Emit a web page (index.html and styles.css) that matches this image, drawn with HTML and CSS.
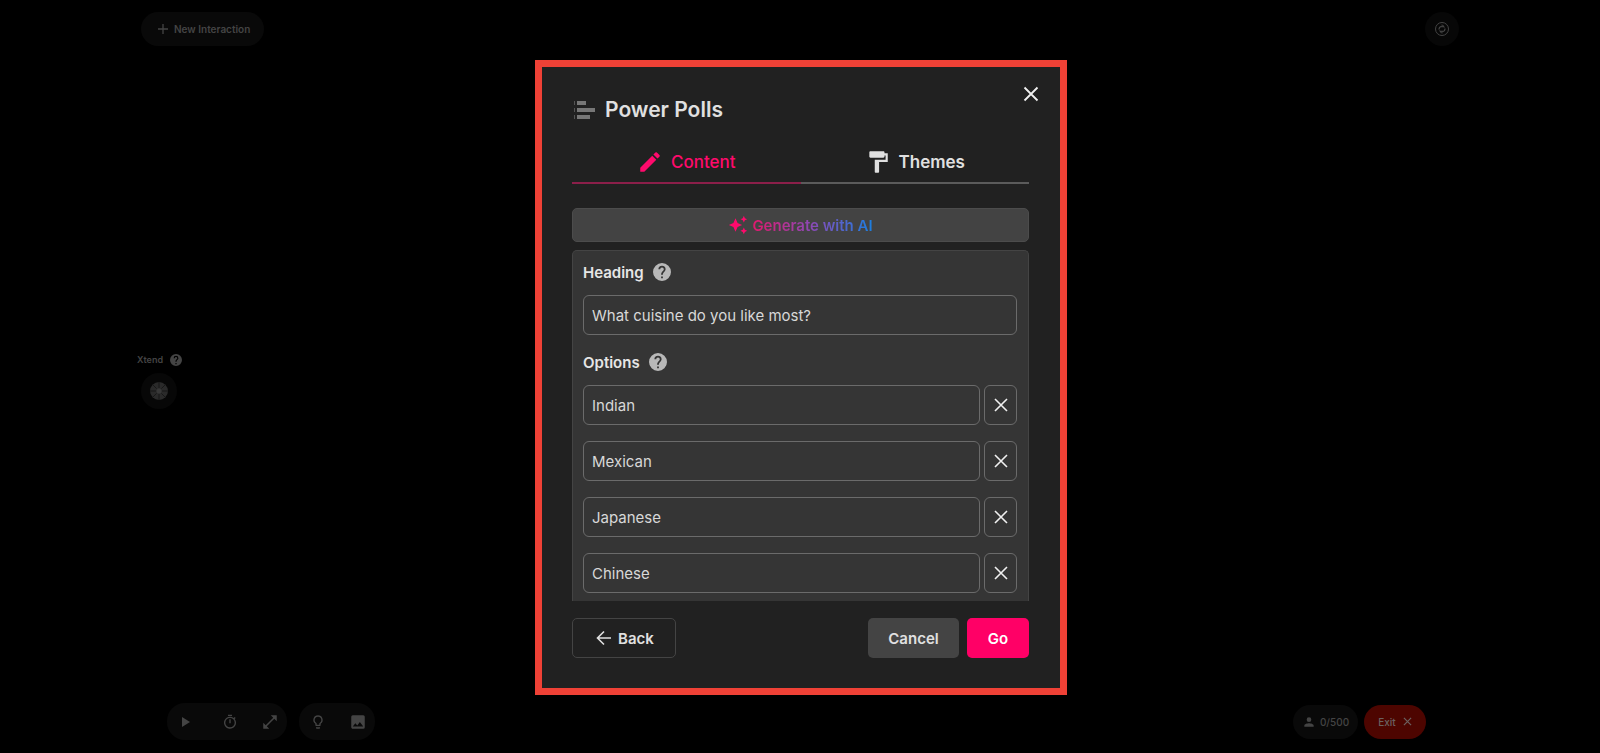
FILE: index.html
```html
<!DOCTYPE html>
<html lang="en">
<head>
    <meta charset="utf-8">
    <title>Power Polls</title>
    <link rel="stylesheet" href="styles.css">
</head>

<body>
    <div class="page">
        <div class="top-bar">
            <button class="pill new-button">
                <svg width="12" height="12" viewBox="0 0 12 12"><path d="M6 1v10M1 6h10" stroke="currentColor" stroke-width="1.3"/></svg>
                New Interaction
            </button>
            <button class="round-button small" aria-label="Account">
                <svg width="16" height="16" viewBox="0 0 16 16" fill="none" stroke="currentColor"><circle cx="8" cy="8" r="6.5"/><path d="M5 8.500V8a3 3 0 015.500-1.500M11 7.500V8a3 3 0 01-5.500 1.500" stroke-width="1.300"/><path d="M8 3.500l1.500 1.500L8 6.500M8 9.500L6.500 11 8 12.500"/></svg>
            </button>
        </div>

        <div class="side">
            <div class="side-label">
                Xtend
                <svg width="12" height="12" viewBox="2 2 20 20" fill="currentColor"><path d="M12 2a10 10 0 100 20 10 10 0 000-20zm1 17h-2v-2h2v2zm2.070-7.750l-.9.920C13.450 12.900 13 13.500 13 15h-2v-.5c0-1.100.45-2.100 1.170-2.830l1.240-1.260c.37-.36.59-.86.59-1.410a2 2 0 00-4 0H8a4 4 0 018 0c0 .88-.36 1.680-.93 2.250z"/></svg>
            </div>
            <button class="round-button" aria-label="Xtend">
                <svg width="18" height="18" viewBox="0 0 18 18"><circle cx="9" cy="9" r="9" fill="#2a2a2a"/><path d="M9 0v6M9 12v6M0 9h6M12 9h6M2.600 2.600l4 4M11.400 11.400l4 4M15.400 2.600l-4 4M6.600 11.400l-4 4" stroke="#171717" stroke-width="1"/><circle cx="9" cy="9" r="2.500" fill="#383838"/></svg>
            </button>
        </div>

        <div class="bottom-bar">
            <div class="group">
                <div class="pill tools">
                    <button class="play-button" aria-label="Play"><svg width="16" height="16" viewBox="0 0 16 16" fill="currentColor"><path d="M4 3v10l8-5z"/></svg></button>
                    <button aria-label="Timer"><svg width="16" height="16" viewBox="0 0 24 24" fill="currentColor"><path d="M15 1H9v2h6V1zm-4 13h2V8h-2v6zm8.030-6.610l1.420-1.420c-.43-.51-.9-.99-1.410-1.410l-1.420 1.420A9 9 0 1019.030 7.390zM12 20a7 7 0 110-14 7 7 0 010 14z"/></svg></button>
                    <button aria-label="Expand"><svg width="18" height="18" viewBox="0 0 24 24" fill="currentColor"><path d="M21 11V3h-8l3.290 3.290-10 10L3 13v8h8l-3.290-3.290 10-10z"/></svg></button>
                </div>
                <div class="pill tools two">
                    <button aria-label="Ideas"><svg width="16" height="16" viewBox="0 0 24 24" fill="currentColor"><path d="M9 21c0 .55.45 1 1 1h4c.55 0 1-.45 1-1v-1H9v1zm3-19a7 7 0 00-4 12.740V17c0 .55.45 1 1 1h6c.55 0 1-.45 1-1v-2.260A7 7 0 0012 2zm2.850 11.100l-.85.600V16h-4v-2.300l-.85-.6A5 5 0 1114.850 13.100z"/></svg></button>
                    <button aria-label="Image"><svg width="18" height="18" viewBox="0 0 24 24" fill="currentColor"><path d="M21 19V5a2 2 0 00-2-2H5a2 2 0 00-2 2v14c0 1.100.9 2 2 2h14a2 2 0 002-2zM8.500 13.500l2.500 3 3.500-4.500 4.500 6H5l3.500-4.500z"/></svg></button>
                </div>
            </div>
            <div class="group right">
                <div class="pill count">
                    <svg width="14" height="14" viewBox="0 0 24 24" fill="currentColor"><path d="M12 12a4 4 0 100-8 4 4 0 000 8zm0 2c-2.670 0-8 1.340-8 4v2h16v-2c0-2.660-5.330-4-8-4z"/></svg>
                    0/500
                </div>
                <button class="pill exit-button">
                    Exit
                    <svg width="9" height="9" viewBox="0 0 10 10"><path d="M1 1l8 8M9 1l-8 8" stroke="currentColor" stroke-width="1.300"/></svg>
                </button>
            </div>
        </div>
    </div>

    <div class="overlay">
        <div class="modal" role="dialog" aria-labelledby="modal-title">
            <button class="close-button" aria-label="Close">
                <svg width="16" height="16" viewBox="0 0 16 16"><path d="M1.500 1.500l13 13M14.500 1.500l-13 13" stroke="currentColor" stroke-width="1.800"/></svg>
            </button>

            <div class="modal-title">
                <svg width="23" height="20" viewBox="0 0 23 20" fill="#777"><path d="M5 1h9v4H5zM5 8h18v4H5zM5 15h13v4H5z"/><path d="M2 1h1v4H2zM2 8h1v4H2zM2 15h1v4H2z" fill="#555"/></svg>
                <h2 id="modal-title">Power Polls</h2>
            </div>

            <div class="tabs">
                <button class="tab active">
                    <svg width="26" height="26" viewBox="0 0 24 24" fill="currentColor"><path d="M3 17.250V21h3.750L17.810 9.940l-3.750-3.750L3 17.250zM20.710 7.040a1 1 0 000-1.410l-2.340-2.340a1 1 0 00-1.410 0l-1.830 1.830 3.750 3.750 1.830-1.830z"/></svg>
                    Content
                </button>
                <button class="tab">
                    <svg width="26" height="26" viewBox="0 0 24 24" fill="currentColor"><path d="M18 4V3c0-.55-.45-1-1-1H5c-.55 0-1 .45-1 1v4c0 .55.45 1 1 1h12c.55 0 1-.45 1-1V6h1v4H9v11c0 .55.45 1 1 1h2c.55 0 1-.45 1-1v-9h8V4h-3z"/></svg>
                    Themes
                </button>
            </div>

            <button class="ai-button">
                <svg width="20" height="20" viewBox="0 0 24 24" fill="#ff0a6c"><path d="M19 9l1.250-2.750L23 5l-2.750-1.250L19 1l-1.250 2.750L15 5l2.750 1.250L19 9zM11.500 9.500L9 4 6.500 9.500 1 12l5.500 2.500L9 20l2.500-5.500L17 12l-5.500-2.500zM19 15l-1.250 2.750L15 19l2.750 1.250L19 23l1.250-2.750L23 19l-2.750-1.250L19 15z"/></svg>
                <span>Generate with AI</span>
            </button>

            <div class="panel">
                <div class="label-row">
                    <label for="heading">Heading</label>
                    <svg width="18" height="18" viewBox="2 2 20 20" fill="currentColor"><path d="M12 2a10 10 0 100 20 10 10 0 000-20zm1 17h-2v-2h2v2zm2.070-7.750l-.9.920C13.450 12.900 13 13.500 13 15h-2v-.5c0-1.100.45-2.100 1.170-2.830l1.240-1.260c.37-.36.59-.86.59-1.410a2 2 0 00-4 0H8a4 4 0 018 0c0 .88-.36 1.680-.93 2.250z"/></svg>
                </div>
                <input type="text" id="heading" class="field" value="What cuisine do you like most?">

                <div class="label-row options-label">
                    <label for="option1">Options</label>
                    <svg width="18" height="18" viewBox="2 2 20 20" fill="currentColor"><path d="M12 2a10 10 0 100 20 10 10 0 000-20zm1 17h-2v-2h2v2zm2.070-7.750l-.9.920C13.450 12.900 13 13.500 13 15h-2v-.5c0-1.100.45-2.100 1.170-2.830l1.240-1.260c.37-.36.59-.86.59-1.410a2 2 0 00-4 0H8a4 4 0 018 0c0 .88-.36 1.680-.93 2.250z"/></svg>
                </div>
                <div class="option">
                    <input type="text" id="option1" class="field" value="Indian">
                    <button class="remove-button" aria-label="Remove"><svg width="14" height="14" viewBox="0 0 14 14"><path d="M1 1l12 12M13 1L1 13" stroke="currentColor" stroke-width="1.600"/></svg></button>
                </div>
                <div class="option">
                    <input type="text" class="field" aria-label="Option 2" value="Mexican">
                    <button class="remove-button" aria-label="Remove"><svg width="14" height="14" viewBox="0 0 14 14"><path d="M1 1l12 12M13 1L1 13" stroke="currentColor" stroke-width="1.600"/></svg></button>
                </div>
                <div class="option">
                    <input type="text" class="field" aria-label="Option 3" value="Japanese">
                    <button class="remove-button" aria-label="Remove"><svg width="14" height="14" viewBox="0 0 14 14"><path d="M1 1l12 12M13 1L1 13" stroke="currentColor" stroke-width="1.600"/></svg></button>
                </div>
                <div class="option">
                    <input type="text" class="field" aria-label="Option 4" value="Chinese">
                    <button class="remove-button" aria-label="Remove"><svg width="14" height="14" viewBox="0 0 14 14"><path d="M1 1l12 12M13 1L1 13" stroke="currentColor" stroke-width="1.600"/></svg></button>
                </div>
            </div>

            <div class="modal-footer">
                <button class="btn back-button">
                    <svg width="16" height="16" viewBox="0 0 16 16" fill="none" stroke="currentColor" stroke-width="1.600"><path d="M15 8H2M8 1.500L1.500 8 8 14.500"/></svg>
                    Back
                </button>
                <button class="btn cancel-button">Cancel</button>
                <button class="btn go-button">Go</button>
            </div>
        </div>
    </div>
</body>
</html>
```
FILE: styles.css
```css
* {
    box-sizing: border-box;
}

body {
    margin: 0;
    background-color: #000;
    font-family: Inter, "Liberation Sans", sans-serif;
    color: #e0e0e0;
}

button {
    font-family: inherit;
    border: none;
    padding: 0;
    background: none;
    color: inherit;
}

svg {
    display: block;
    flex-shrink: 0;
}

/* dimmed screen behind the modal */
.page {
    min-height: 100vh;
    padding: 12px 141px 13px;
    display: flex;
    flex-direction: column;
    justify-content: space-between;
    color: #444;
}

.top-bar,
.bottom-bar,
.group {
    display: flex;
    align-items: center;
}

.top-bar,
.bottom-bar {
    justify-content: space-between;
}

.bottom-bar {
    padding: 0 33px 0 26px;
}

.group {
    gap: 12px;
}

.group.right {
    gap: 6px;
}

.pill {
    display: flex;
    align-items: center;
    justify-content: center;
    height: 34px;
    border-radius: 18px;
    background-color: #090909;
    font-size: 10px;
}

.new-button {
    gap: 5px;
    padding: 0 14px 0 16px;
    font-weight: 600;
}

.round-button {
    display: flex;
    align-items: center;
    justify-content: center;
    width: 36px;
    height: 36px;
    border-radius: 50%;
    background-color: #070707;
}

.round-button.small {
    width: 34px;
    height: 34px;
}

.side {
    padding-top: 13px;
}

.side-label {
    display: flex;
    align-items: center;
    gap: 7px;
    margin-left: -4px;
    margin-bottom: 7px;
    font-size: 9px;
    font-weight: 600;
    line-height: 12px;
}

.tools {
    justify-content: space-between;
    width: 120px;
    height: 37px;
    padding: 0 8px 0 11px;
}

.tools.two {
    width: 76px;
}

.play-button {
    width: 20px;
}

.count {
    gap: 4px;
    width: 65px;
    font-weight: 500;
}

.exit-button {
    gap: 7px;
    width: 62px;
    background-color: #4d0500;
    color: #6b6260;
    font-weight: 500;
}

/* modal */
.overlay {
    position: fixed;
    inset: 0;
    padding: 60px 0 58px 2px;
    display: flex;
    justify-content: center;
}

.modal {
    position: relative;
    width: 532px;
    padding: 31px 31px 30px 30px;
    border: 7px solid #ef4136;
    background-color: #212121;
    display: flex;
    flex-direction: column;
}

.close-button {
    position: absolute;
    top: 19px;
    right: 21px;
    color: #f0f0f0;
}

.modal-title {
    display: flex;
    align-items: center;
    gap: 10px;
    height: 24px;
}

.modal-title h2 {
    margin: 0;
    font-size: 21px;
    font-weight: 600;
    line-height: 24px;
}

.tabs {
    display: flex;
    margin-top: 19px;
}

.tab {
    flex: 1;
    display: flex;
    align-items: center;
    justify-content: center;
    gap: 8px;
    height: 43px;
    border-bottom: 2px solid #5b5b5b;
    font-size: 17px;
    font-weight: 600;
}

.tab.active {
    color: #ff0a6c;
    border-bottom-color: #8c1f4a;
    font-weight: 500;
}

.ai-button {
    display: flex;
    align-items: center;
    justify-content: center;
    gap: 4px;
    height: 34px;
    flex-shrink: 0;
    margin-top: 24px;
    border: 1px solid #4c4c4c;
    border-radius: 5px;
    background-color: #434343;
    font-size: 15px;
    font-weight: 600;
}

.ai-button span {
    background: linear-gradient(to right, #e0186c, #8a4bb8 50%, #1a7fe0);
    -webkit-background-clip: text;
    background-clip: text;
    color: transparent;
}

.panel {
    flex: 1;
    min-height: 0;
    overflow: hidden;
    margin-top: 8px;
    padding: 10px 11px 0 10px;
    border: 1px solid #444;
    border-bottom: none;
    border-radius: 5px 5px 0 0;
    background-color: #353535;
}

.label-row {
    display: flex;
    align-items: center;
    gap: 9px;
    height: 22px;
    margin-bottom: 12px;
    color: #b8b8b8;
}

.label-row label {
    font-size: 15px;
    font-weight: 600;
    color: #e6e6e6;
}

.options-label {
    margin-top: 16px;
}

.field {
    display: block;
    width: 100%;
    height: 40px;
    padding: 0 8px;
    border: 1px solid #6b6b6b;
    border-radius: 6px;
    background-color: #353535;
    font-family: inherit;
    font-size: 15px;
    color: #d8d8d8;
}

.option {
    display: flex;
    gap: 4px;
    margin-bottom: 16px;
}

.remove-button {
    display: flex;
    align-items: center;
    justify-content: center;
    flex-shrink: 0;
    width: 33px;
    height: 40px;
    border: 1px solid #6b6b6b;
    border-radius: 6px;
    color: #f0f0f0;
}

.modal-footer {
    display: flex;
    gap: 8px;
    margin-top: 17px;
}

.btn {
    display: flex;
    align-items: center;
    justify-content: center;
    height: 40px;
    border-radius: 5px;
    font-size: 15px;
    font-weight: 600;
}

.back-button {
    gap: 6px;
    width: 104px;
    margin-right: auto;
    padding-left: 2px;
    border: 1px solid #444;
}

.cancel-button {
    width: 91px;
    background-color: #444;
}

.go-button {
    width: 62px;
    background-color: #ff0066;
    color: #fff;
}
```
